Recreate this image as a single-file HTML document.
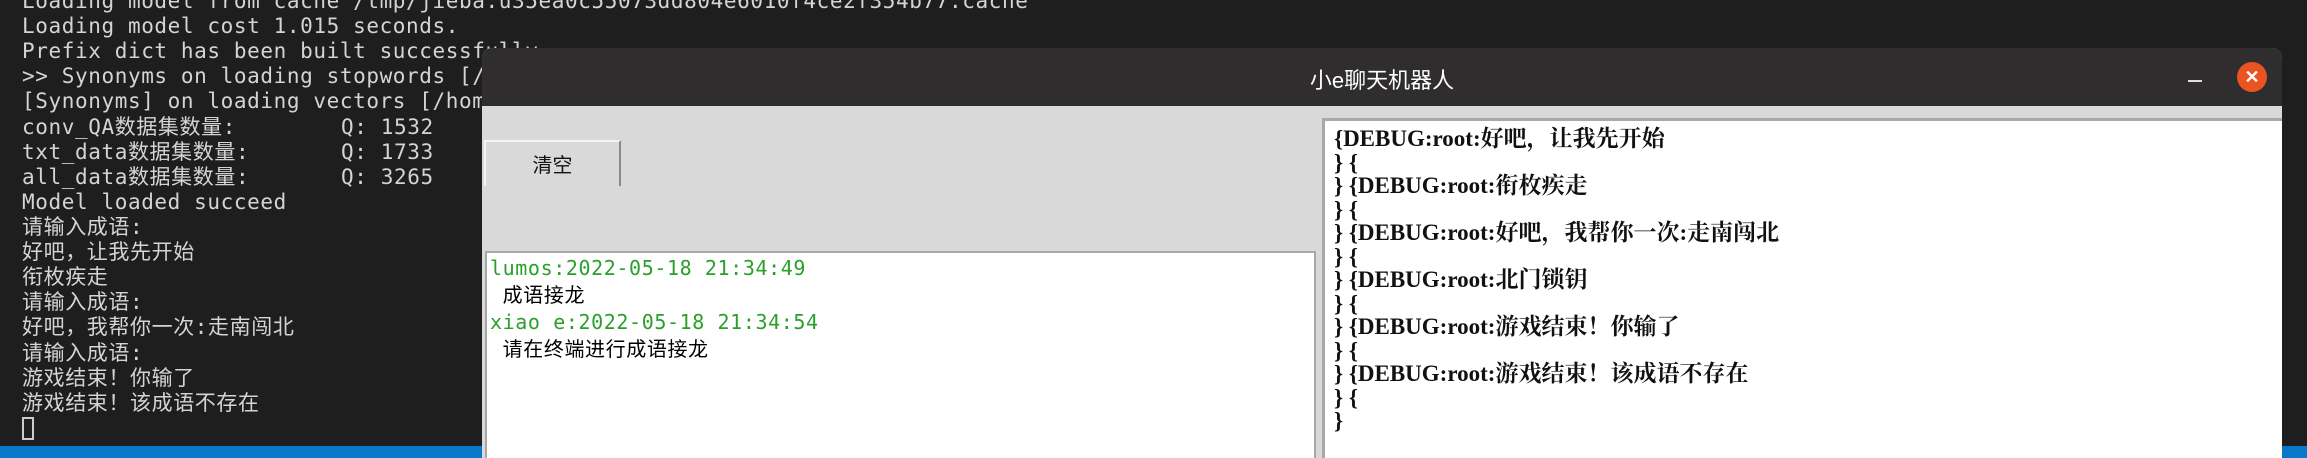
<!DOCTYPE html>
<html><head><meta charset="utf-8"><style>
*{margin:0;padding:0;box-sizing:border-box}
html,body{width:2307px;height:458px;overflow:hidden}
body{background:#1e1e1e;position:relative}
.t{position:absolute;left:22px;color:#d4d4d4;font:21px/25px "DejaVu Sans Mono","Noto Sans CJK SC",monospace;letter-spacing:0.6px;white-space:pre}
.blue{position:absolute;left:0;top:446px;width:2307px;height:12px;background:#0a78c8}
.win{position:absolute;left:482px;top:48px;width:1800px;height:410px;background:#d9d9d9;border-radius:10px 10px 0 0;overflow:hidden}
.title{height:58px;background:#2f2d2e;position:relative}
.title .tx{position:absolute;left:0;right:0;top:15px;text-align:center;color:#fff;font:22px "Liberation Sans","Noto Sans CJK SC",sans-serif}
.min{position:absolute;left:1706px;top:32px;width:14px;height:2px;background:#ddd}
.close{position:absolute;left:1755px;top:14px;width:30px;height:30px;border-radius:50%;background:#e95420;color:#fff;text-align:center;font:bold 18px/30px "Liberation Sans",sans-serif}
.btn{position:absolute;left:2px;top:92px;width:137px;height:46px;background:#d9d9d9;border-top:2px solid #f4f4f4;border-left:2px solid #f4f4f4;border-right:2px solid #888;font:20px/44px "Noto Sans CJK SC",sans-serif;text-align:center;color:#111}
.lt{position:absolute;left:3px;top:203px;width:831px;height:300px;background:#fff;border:2px solid #a8a8a8}
.ml{position:absolute;left:3px;font:20px/27px "DejaVu Sans Mono","Noto Sans CJK SC",monospace;letter-spacing:0.6px;white-space:pre}
.g{color:#2aa02a}
.rt{position:absolute;left:840px;top:70px;width:980px;height:400px;background:#fff;border:3px solid #a8a8a8;border-right:none}
.dl{position:absolute;left:9px;font:bold 23px/23.5px "Liberation Serif","Noto Serif CJK SC",serif;white-space:pre;color:#111}
</style></head><body>
<div class="t" style="top:-11px">Loading model from cache /tmp/jieba.u35ea0c55073dd804e6010f4ce2f354b77.cache</div>
<div class="t" style="top:14px">Loading model cost 1.015 seconds.</div>
<div class="t" style="top:39px">Prefix dict has been built successfully.</div>
<div class="t" style="top:64px">&gt;&gt; Synonyms on loading stopwords [/home/lumos/anaconda3/lib/python3.8/site-packages/synonyms/data/stopwords.txt] ...</div>
<div class="t" style="top:89px">[Synonyms] on loading vectors [/home/lumos/anaconda3/lib/python3.8/site-packages/synonyms/data/words.vector.gz] ...</div>
<div class="t" style="top:115px">conv_QA数据集数量:</div><div class="t" style="top:115px;left:341px">Q: 1532</div>
<div class="t" style="top:140px">txt_data数据集数量:</div><div class="t" style="top:140px;left:341px">Q: 1733</div>
<div class="t" style="top:165px">all_data数据集数量:</div><div class="t" style="top:165px;left:341px">Q: 3265</div>
<div class="t" style="top:190px">Model loaded succeed</div>
<div class="t" style="top:215px">请输入成语:</div>
<div class="t" style="top:240px">好吧，让我先开始</div>
<div class="t" style="top:265px">衔枚疾走</div>
<div class="t" style="top:290px">请输入成语:</div>
<div class="t" style="top:315px">好吧，我帮你一次:走南闯北</div>
<div class="t" style="top:341px">请输入成语:</div>
<div class="t" style="top:366px">游戏结束！你输了</div>
<div class="t" style="top:391px">游戏结束！该成语不存在</div>
<div style="position:absolute;left:22px;top:417px;width:12px;height:23px;border:2px solid #ccc"></div>
<div class="blue"></div>
<div class="win">
 <div class="title"><div class="tx">小e聊天机器人</div><div class="min"></div><div class="close">✕</div></div>
 <div class="btn">清空</div>
 <div class="lt">
  <div class="ml g" style="top:2px">lumos:2022-05-18 21:34:49</div>
  <div class="ml" style="top:29px"> 成语接龙</div>
  <div class="ml g" style="top:56px">xiao e:2022-05-18 21:34:54</div>
  <div class="ml" style="top:83px"> 请在终端进行成语接龙</div>
 </div>
 <div class="rt">
  <div class="dl" style="top:6px">{DEBUG:root:好吧，让我先开始</div>
  <div class="dl" style="top:29.5px">} {</div>
  <div class="dl" style="top:53px">} {DEBUG:root:衔枚疾走</div>
  <div class="dl" style="top:76.5px">} {</div>
  <div class="dl" style="top:100px">} {DEBUG:root:好吧，我帮你一次:走南闯北</div>
  <div class="dl" style="top:123.5px">} {</div>
  <div class="dl" style="top:147px">} {DEBUG:root:北门锁钥</div>
  <div class="dl" style="top:170.5px">} {</div>
  <div class="dl" style="top:194px">} {DEBUG:root:游戏结束！你输了</div>
  <div class="dl" style="top:217.5px">} {</div>
  <div class="dl" style="top:241px">} {DEBUG:root:游戏结束！该成语不存在</div>
  <div class="dl" style="top:264.5px">} {</div>
  <div class="dl" style="top:288px">}</div>
 </div>
</div>
</body></html>
